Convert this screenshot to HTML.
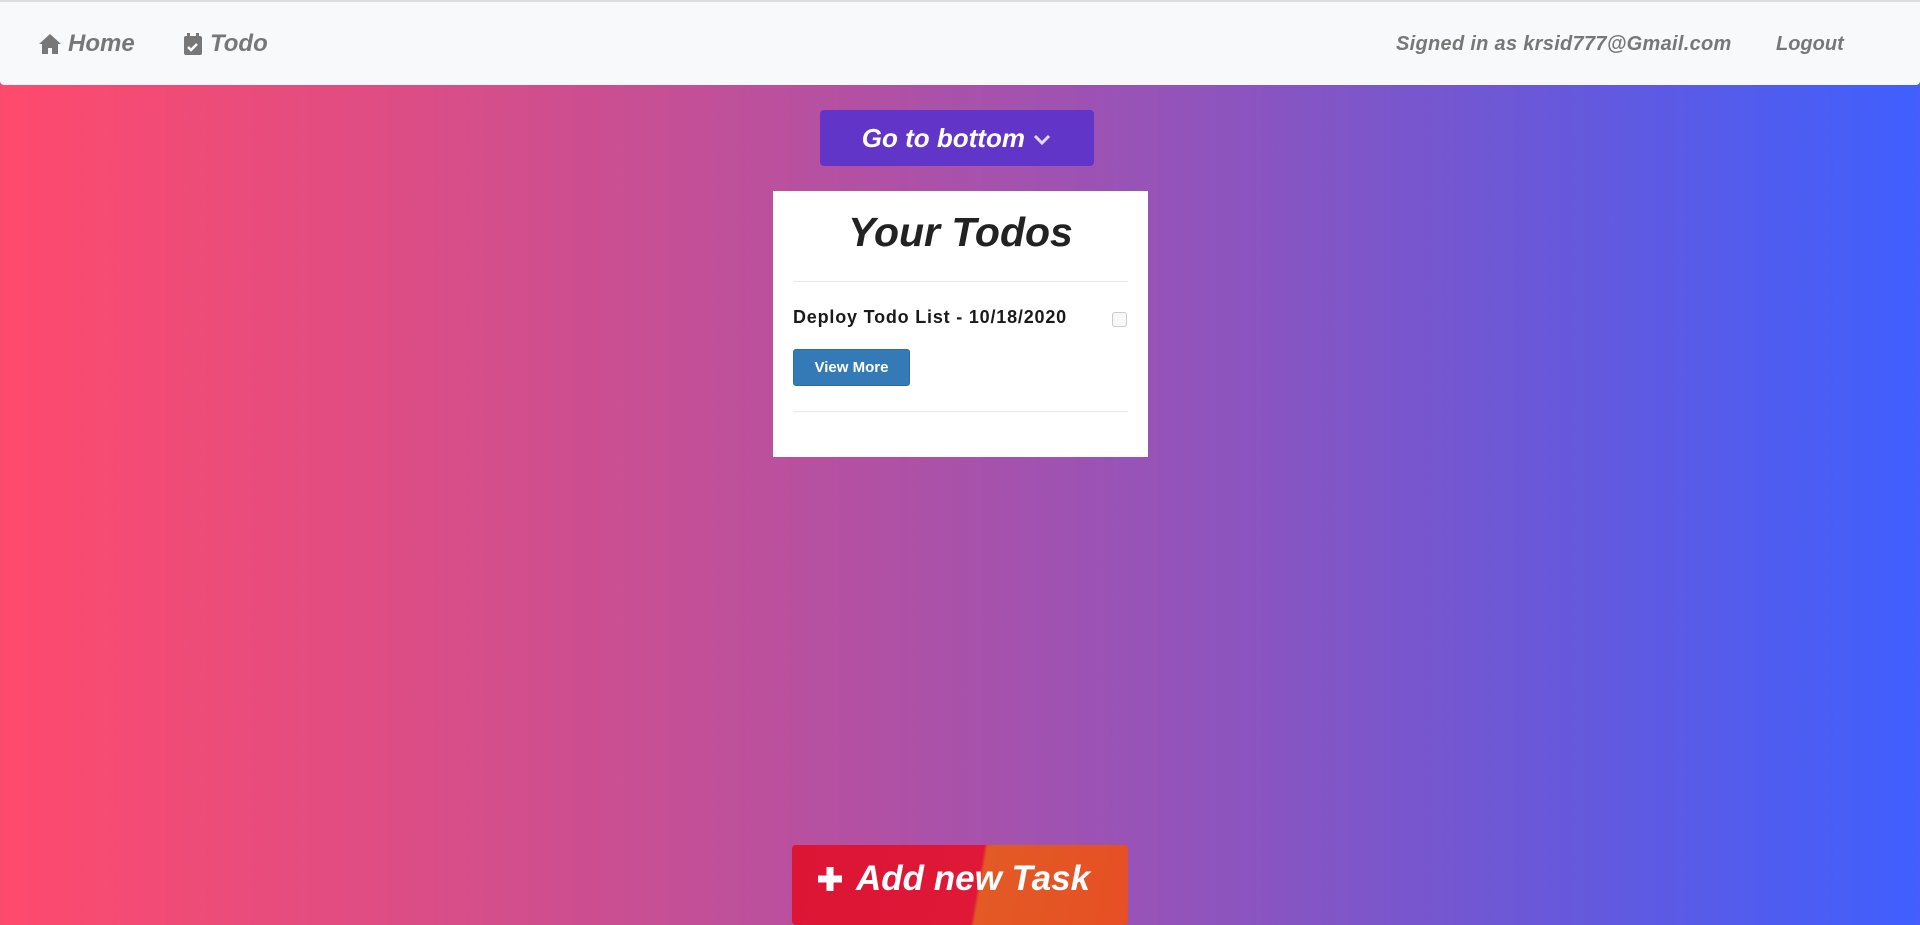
<!DOCTYPE html>
<html><head><meta charset="utf-8"><style>
*{box-sizing:border-box;margin:0;padding:0}
body{width:1920px;height:902px;overflow:hidden;font-family:"Liberation Sans",sans-serif;font-weight:bold;background:linear-gradient(90deg,#ff4a6c 0%,#c54f96 35%,#9653b8 60%,#6a58d8 80%,#3f5ffe 100%);position:relative}
.nav{position:absolute;left:0;top:0;width:1920px;height:85px;background:#f8f9fa;border-top:2px solid #ddd;border-radius:0 0 4px 4px;color:#777;font-size:24px}
.nav span{position:absolute;top:28px;font-style:italic}
.btn1{position:absolute;left:820px;top:110px;width:274px;height:56px;background:#6235c9;border-radius:4px;color:#fff;font-size:26px;font-style:italic;text-align:center;line-height:56px}
.card{position:absolute;left:773px;top:191px;width:375px;height:266px;background:#fff}
.card h1{position:absolute;top:18px;width:100%;text-align:center;font-size:41px;font-style:italic;color:#222}
.hr{position:absolute;left:20px;right:20px;height:1px;background:#e8e8e8}
.item{position:absolute;left:20px;top:116px;font-size:18px;letter-spacing:0.8px;color:#1a1a1a}
.cb{position:absolute;left:339px;top:121px;width:15px;height:15px;border:1px solid #ccc;border-radius:3px;background:#f8f8f8}
.vm{position:absolute;left:20px;top:158px;width:117px;height:37px;background:#337ab7;border:1px solid #2e6da4;border-radius:3px;color:#fff;font-size:15px;text-align:center;line-height:35px}
.add{position:absolute;left:792px;top:845px;width:336px;height:80px;border-radius:4px;background:linear-gradient(100deg,#dc1535 0%,#e01838 55%,#e35a25 56%,#e64f24 100%);color:#fff;font-size:35px;font-style:italic;line-height:68px;padding-left:24px}
</style></head><body>
<div class="nav">
<svg style="position:absolute;left:38px;top:31px" width="24" height="22" viewBox="0 0 24 22"><path d="M12 1L1 11h3v10h6v-6h4v6h6V11h3z" fill="#777"/></svg>
<span style="left:68px">Home</span>
<svg style="position:absolute;left:183px;top:31px" width="20" height="23" viewBox="0 0 20 23"><rect x="1" y="3" width="18" height="19" rx="2" fill="#777"/><rect x="4" y="0" width="3" height="6" fill="#777"/><rect x="13" y="0" width="3" height="6" fill="#777"/><path d="M5 14l3 3 6-6" stroke="#fff" stroke-width="2.5" fill="none"/></svg>
<span style="left:210px">Todo</span>
<span style="left:1396px;font-size:20px;top:31px;letter-spacing:0.3px">Signed in as krsid777@Gmail.com</span>
<span style="left:1776px;font-size:20px;top:31px">Logout</span>
</div>
<div class="btn1">Go to bottom <svg width="20" height="14" viewBox="0 0 20 14"><path d="M3 3l7 7 7-7" stroke="#e8d8ff" stroke-width="3" fill="none"/></svg></div>
<div class="card">
<h1>Your Todos</h1>
<div class="hr" style="top:90px"></div>
<div class="item">Deploy Todo List - 10/18/2020</div>
<div class="cb"></div>
<div class="vm">View More</div>
<div class="hr" style="top:220px"></div>
</div>
<div class="add"><svg width="28" height="28" viewBox="0 0 28 28" style="vertical-align:-3px;margin-right:12px"><path d="M14 2v24M2 14h24" stroke="#fff" stroke-width="7"/></svg>Add new Task</div>
</body></html>
